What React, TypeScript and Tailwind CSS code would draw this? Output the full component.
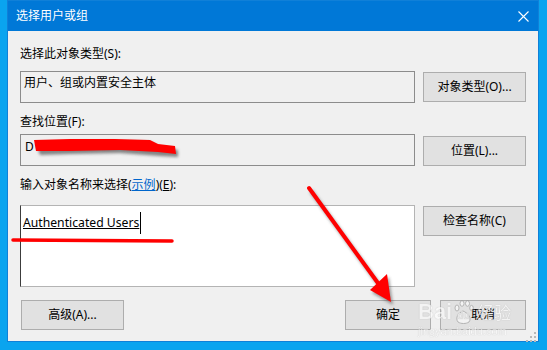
import React from "react";

const font = { fontFamily: '"Noto Sans", "Noto Sans CJK SC", sans-serif' };

function Btn({ children, className = "" }: { children: React.ReactNode; className?: string }) {
  return (
    <div
      className={
        "h-[30px] flex items-center justify-center border border-[#adadad] bg-[#e1e1e1] text-[12px] text-black leading-[16px] " +
        className
      }
    >
      {children}
    </div>
  );
}

export default function App() {
  return (
    <div className="relative w-[547px] h-[350px] bg-[#0aa4ef] overflow-hidden" style={font}>
      <div className="ml-[7px] w-[532px] h-[342px] border border-[#1080d8] bg-[#f0f0f0] flex flex-col">
        {/* title bar */}
        <div className="h-[30px] bg-[#0078d7] flex items-center justify-between pl-[8px] pr-[9px] text-white text-[12px]">
          <span className="leading-[16px]">选择用户或组</span>
          <svg width="11" height="11" viewBox="0 0 11 11">
            <path d="M0.5 0.5 L10.5 10.5 M10.5 0.5 L0.5 10.5" stroke="#fff" strokeWidth="1.1" />
          </svg>
        </div>
        {/* body */}
        <div className="flex flex-col px-[12px] text-[12px] text-black">
          <div className="mt-[15px] h-[16px] leading-[16px]">选择此对象类型(S):</div>
          <div className="mt-[9px] flex gap-[8px] items-start">
            <div className="w-[395px] h-[32px] border border-[#8c8c8c] bg-[#f0f0f0] pl-[3px] pt-[3px] leading-[16px]">
              用户、组或内置安全主体
            </div>
            <Btn className="w-[103px] mt-[1px]">对象类型(O)...</Btn>
          </div>
          <div className="mt-[11px] h-[16px] leading-[16px]">查找位置(F):</div>
          <div className="mt-[4px] flex gap-[8px] items-start">
            <div className="w-[395px] h-[32px] border border-[#8c8c8c] bg-[#f0f0f0] pl-[4px] pt-[4px] leading-[16px]">
              D
            </div>
            <Btn className="w-[103px] mt-[2px]">位置(L)...</Btn>
          </div>
          <div className="mt-[11px] h-[16px] leading-[16px]">
            输入对象名称来选择(<span className="text-[#0066cc] underline">示例</span>)(<span className="underline">E</span>):
          </div>
          <div className="mt-[12px] flex gap-[8px] items-start">
            <div className="w-[395px] h-[82px] border border-[#b4b4b4] border-l-[#3c3c3c] bg-white pl-[2px] pt-[6px]">
              <div className="flex items-center">
                <span className="underline text-[12.2px] leading-[20px]">Authenticated Users</span>
                <span className="inline-block w-px h-[22px] bg-black ml-[1px]" />
              </div>
            </div>
            <Btn className="w-[103px] mt-[1px]">检查名称(C)</Btn>
          </div>
          <div className="mt-[13px] flex items-start">
            <Btn className="w-[103px] ml-[1px]">高级(A)...</Btn>
            <div className="flex-1" />
            <Btn className="w-[86px]">确定</Btn>
            <Btn className="w-[86px] ml-[9px]">取消</Btn>
          </div>
        </div>
      </div>

      {/* watermark */}
      <div
        className="absolute left-[418px] top-[300px] w-[100px] text-white pointer-events-none"
        style={{ textShadow: "0 0 1px rgba(110,110,110,0.7)", opacity: 0.6 }}
      >
        <div className="flex items-end h-[24px] leading-[24px]">
          <span className="text-[22px] font-bold" style={{ fontFamily: '"Liberation Sans", sans-serif' }}>
            Bai
          </span>
          <div className="relative w-[22px] h-[24px]">
            <svg width="22" height="24" viewBox="0 0 22 24" className="absolute left-0 top-0">
              <g fill="#fff" stroke="rgba(140,140,140,0.9)" strokeWidth="1">
                <ellipse cx="5" cy="8" rx="2" ry="3" />
                <ellipse cx="10" cy="3.5" rx="2" ry="2.8" />
                <ellipse cx="15.5" cy="3.5" rx="2" ry="2.8" />
                <ellipse cx="19.5" cy="8" rx="1.8" ry="2.6" />
                <path d="M11 11 C6 13 3 18 6 22 C9 24 14 24 17 22 C20 18 16 13 11 11 Z" />
              </g>
            </svg>
            <span
              className="absolute left-[5px] top-[10px] text-[10px] leading-[12px] font-bold text-[#e8e8e8]"
              style={{ fontFamily: '"Liberation Sans", sans-serif' }}
            >
              du
            </span>
          </div>
          <span className="text-[17px] leading-[22px] ml-[3px]">经验</span>
        </div>
        <div className="text-[11px] leading-[12px] mt-[1px]" style={{ fontFamily: '"Liberation Sans", sans-serif' }}>
          jingyan.baidu.com
        </div>
      </div>

      {/* annotations */}
      <svg className="absolute left-0 top-0 pointer-events-none" width="547" height="350" viewBox="0 0 547 350">
        <defs>
          <filter id="sh" x="-20%" y="-20%" width="140%" height="160%">
            <feGaussianBlur stdDeviation="1.5" />
          </filter>
        </defs>
        {/* redaction blob */}
        <path
          d="M36 144 L60 142 L110 141 L150 142 L160 147 L178 150 L178 157 L160 156 L120 153 L70 154 L40 155 Z"
          fill="#555"
          opacity="0.7"
          filter="url(#sh)"
        />
        <path
          d="M34 140 L70 139 L115 139 L150 140 L158 144 L175 146 L176 154 L158 152 L120 150 L70 151 L36 151 Z"
          fill="#ff0000"
        />
        {/* underline */}
        <path d="M13 240 L172 241" stroke="#ff0000" strokeWidth="3.5" strokeLinecap="round" />
        {/* arrow shadow */}
        <g opacity="0.5" filter="url(#sh)" transform="translate(2,3)">
          <path d="M309 188 L383 290" stroke="#444" strokeWidth="4" />
          <path d="M370 290 L387 274 L391 302 Z" fill="#444" />
        </g>
        <path d="M309 188 L383 290" stroke="#ff0000" strokeWidth="4" strokeLinecap="round" />
        <path d="M370 290 L387 274 L391 302 Z" fill="#ff0000" />
        {/* grip */}
        <g fill="#b8b8b8">
          <rect x="534" y="332" width="2" height="2" />
          <rect x="530" y="336" width="2" height="2" />
          <rect x="534" y="336" width="2" height="2" />
          <rect x="526" y="340" width="2" height="2" />
          <rect x="530" y="340" width="2" height="2" />
          <rect x="534" y="340" width="2" height="2" />
        </g>
      </svg>
    </div>
  );
}
